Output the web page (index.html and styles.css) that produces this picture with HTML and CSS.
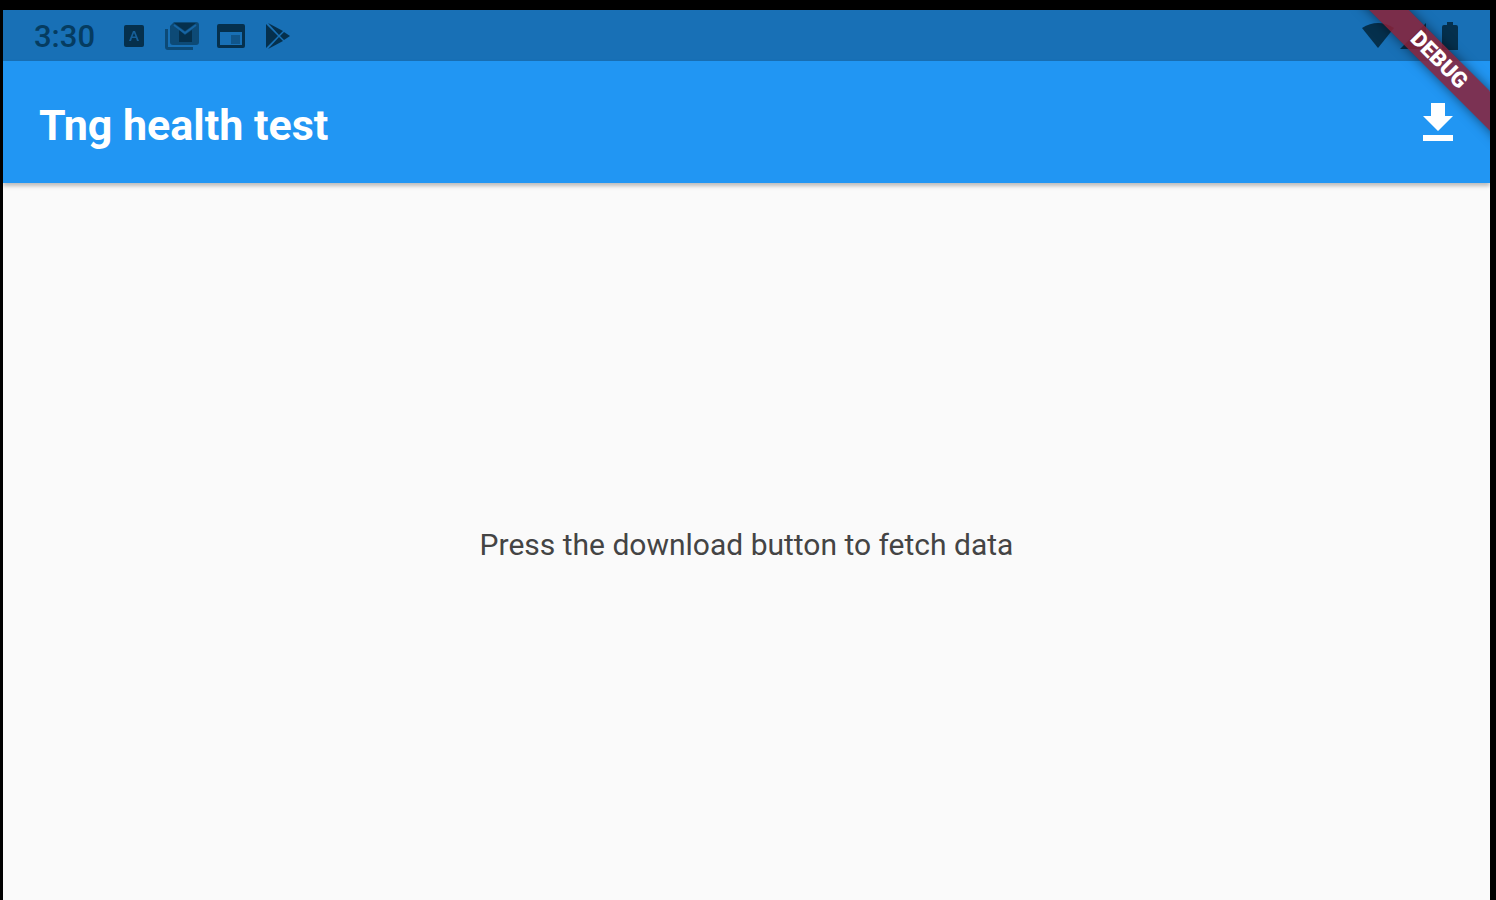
FILE: index.html
```html
<!DOCTYPE html>
<html lang="en">
<head>
<meta charset="utf-8">
<title>Tng health test</title>
<link rel="stylesheet" href="styles.css">
</head>
<body>
<div class="screen">
  <div class="status-bar">
    <div class="status-left">
      <time class="clock">3:30</time>
      <svg class="icon-app" viewBox="0 0 20 22" aria-hidden="true"><path d="M2 0h16a2 2 0 0 1 2 2v18a2 2 0 0 1-2 2H2a2 2 0 0 1-2-2V2a2 2 0 0 1 2-2z"/><path d="M9 6L5 16h2l1-3h4l1 3h2L11 6zM10 8l1.500 3.500h-3z" fill="#165f99" fill-rule="evenodd"/></svg>
      <svg class="icon-mail" viewBox="0 0 34 28" aria-hidden="true"><path d="M0 7h3v18h25v3H3a3 3 0 0 1-3-3z" opacity=".6"/><path d="M9 0h22a3 3 0 0 1 3 3v17a3 3 0 0 1-3 3H8a3 3 0 0 1-3-3V4z" fill="#0d4a76"/><path d="M9 1h22l-11 8zM14 8l6 5 7-5v12H14z"/><path d="M9 3l11 8 11-8" fill="none" stroke="#1765a4" stroke-width="2"/></svg>
      <svg class="icon-window" viewBox="0 0 28 24" aria-hidden="true"><path fill-rule="evenodd" d="M2 0h24a2 2 0 0 1 2 2v20a2 2 0 0 1-2 2H2a2 2 0 0 1-2-2V2a2 2 0 0 1 2-2zM3 8v13h22V8z"/><path d="M14 11h9v9h-9z" opacity=".4"/></svg>
      <svg class="icon-play" viewBox="0 0 26 26" aria-hidden="true"><path d="M1 1v24L13 13zM3 0l11 12 4-4zM3 26l11-12 4 4zM19 9l-4 4 4 4 6-4z"/></svg>
    </div>
    <div class="status-right">
      <svg class="icon-wifi" viewBox="0 0 32 25" aria-hidden="true"><path d="M0 5Q16-5 32 5L16 25z"/></svg>
      <svg class="icon-signal" viewBox="0 0 26 26" aria-hidden="true"><path d="M26 0v26H0z"/></svg>
      <svg class="icon-battery" viewBox="0 0 16 28" aria-hidden="true"><path d="M5 0h6v3h3a2 2 0 0 1 2 2v23H0V5a2 2 0 0 1 2-2h3z"/></svg>
    </div>
  </div>
  <header class="app-bar">
    <h1 class="title">Tng health test</h1>
    <button class="download" type="button" aria-label="Download">
      <svg viewBox="0 0 30 38" aria-hidden="true"><path d="M8 0h14v13h8L15 28 0 13h8zM0 32h30v6H0z"/></svg>
    </button>
  </header>
  <main class="content">
    <p class="message">Press the download button to fetch data</p>
  </main>
  <div class="banner-corner"><div class="banner">DEBUG</div></div>
</div>
</body>
</html>
```
FILE: styles.css
```css
* { box-sizing: border-box; }

body {
  margin: 0;
  background: #000;
  font-family: Roboto, sans-serif;
}

.screen {
  position: relative;
  display: flex;
  flex-direction: column;
  min-height: 100vh;
  border: solid #000;
  border-width: 10px 6px 0 3px;
  background: #fafafa;
}

.status-bar {
  display: flex;
  justify-content: space-between;
  align-items: center;
  height: 51px;
  padding: 0 32px 0 31px;
  background: #1870b6;
  color: #053c61;
}

.status-left, .status-right { display: flex; align-items: center; }
.status-bar svg { fill: #05304d; }
.clock { width: 90px; padding-top: 2px; font-size: 31px; font-weight: 500; line-height: 40px; }
.icon-app { width: 20px; height: 22px; margin-right: 21px; }
.icon-mail { width: 34px; height: 28px; margin-right: 18px; }
.icon-window { width: 28px; height: 24px; margin-right: 20px; }
.icon-play { width: 26px; height: 26px; }
.icon-wifi { width: 32px; height: 25px; margin-right: 6px; }
.icon-signal { width: 26px; height: 26px; margin-right: 16px; }
.icon-battery { width: 16px; height: 28px; }

.app-bar {
  display: flex;
  justify-content: space-between;
  align-items: center;
  height: 122px;
  padding: 0 37px 0 36px;
  background: #2196f3;
  color: #fff;
  box-shadow: 0 3px 4px rgba(0, 0, 0, 0.25);
}

.title { margin: 0; padding-top: 5px; font-size: 43px; font-weight: 700; line-height: 56px; }

.download {
  display: flex;
  padding: 0;
  border: 0;
  background: none;
  cursor: pointer;
}
.download svg { width: 30px; height: 38px; fill: #fff; }

.content {
  flex: 1;
  display: flex;
  align-items: center;
  justify-content: center;
  padding-top: 6px;
}

.message { margin: 0; color: #444; font-size: 30px; line-height: 40px; }

.banner-corner {
  position: absolute;
  top: 0;
  right: 0;
  width: 160px;
  height: 160px;
  overflow: hidden;
  pointer-events: none;
}

.banner {
  position: absolute;
  top: 36px;
  left: 9px;
  width: 200px;
  height: 28px;
  transform: rotate(45deg);
  background: rgba(138, 34, 56, 0.86);
  box-shadow: 0 0 12px rgba(0, 0, 0, 0.5);
  color: #fff;
  font-size: 22px;
  font-weight: 900;
  line-height: 28px;
  text-align: center;
}
```
